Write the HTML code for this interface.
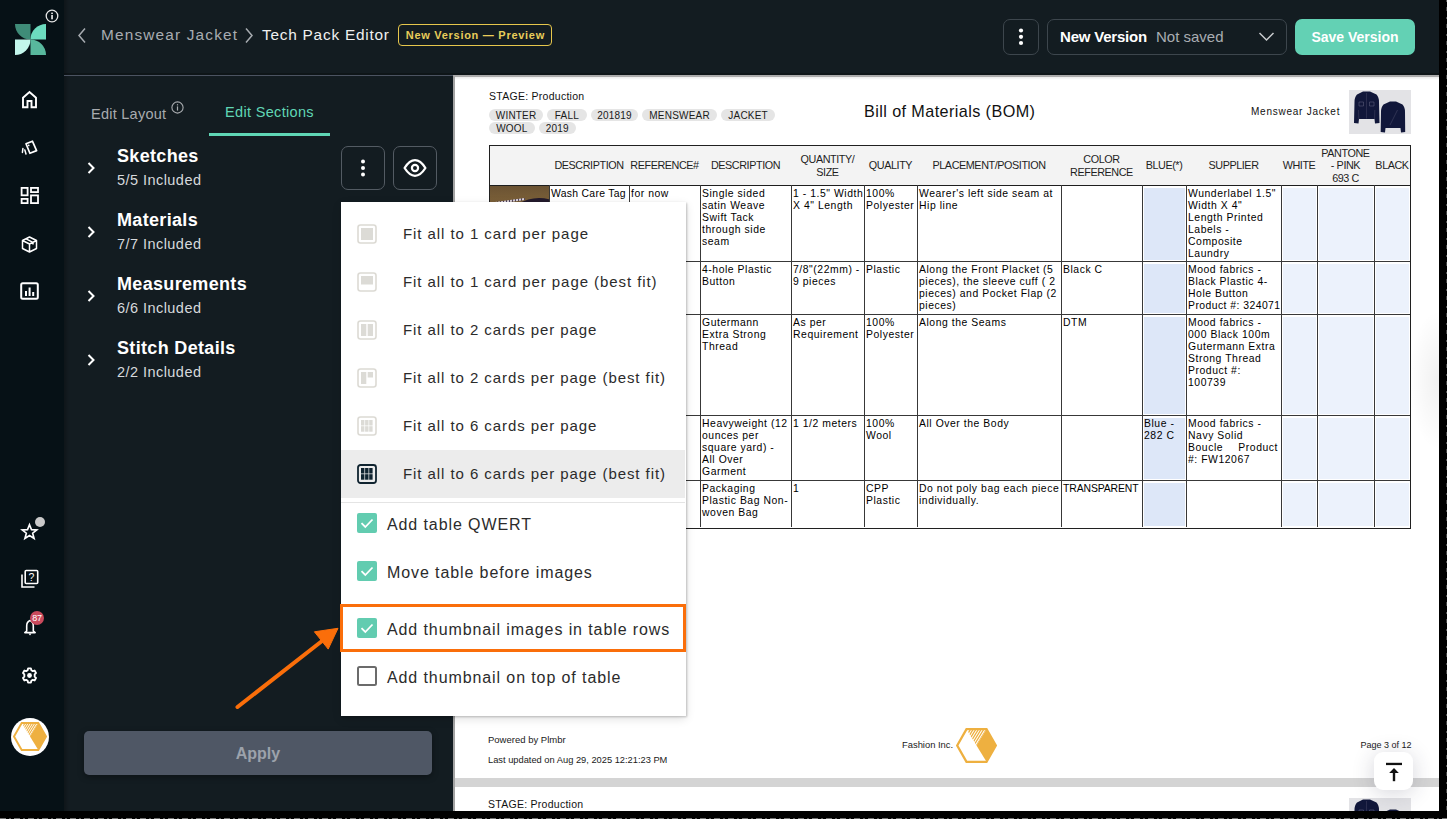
<!DOCTYPE html>
<html><head><meta charset="utf-8">
<style>
*{margin:0;padding:0;box-sizing:border-box}
html,body{width:1447px;height:819px;overflow:hidden;background:#131c21;font-family:"Liberation Sans",sans-serif}
.abs{position:absolute}
#sidebar{position:absolute;left:0;top:0;width:64px;height:819px;background:#061116}
#sbshadow{position:absolute;left:64px;top:0;width:5px;height:819px;background:linear-gradient(90deg,rgba(0,0,0,.25),rgba(0,0,0,0))}
.ic{position:absolute}
#hdrline{position:absolute;left:64px;top:75px;width:390px;height:1px;background:#4b5361}
#hdrshadow{position:absolute;left:64px;top:73px;width:1375px;height:2px;background:rgba(0,0,0,.25)}
.bc{position:absolute;top:26px;font-size:15.4px;line-height:18px;white-space:nowrap}
.badge{position:absolute;left:398px;top:24px;width:154px;height:22px;border:1.5px solid #e6c64c;border-radius:4px;color:#e9cd5a;font-weight:700;font-size:11px;line-height:20px;text-align:center;letter-spacing:.72px;text-indent:.7px}
.hbtn{position:absolute;border:1px solid #3d464d;border-radius:7px}
#save{position:absolute;left:1295px;top:19px;width:120px;height:36px;background:#63d1b4;border-radius:7px;color:#fff;font-weight:700;font-size:14px;line-height:36px;text-align:center}
/* left panel */
.tab{position:absolute;font-size:14.5px;line-height:16px;white-space:nowrap}
.sec{position:absolute;left:64px;width:389px;height:64px}
.sec .t{position:absolute;left:53px;top:8.5px;color:#fff;font-weight:700;font-size:18px;line-height:20px;white-space:nowrap;letter-spacing:.33px}
.sec .s{position:absolute;left:53px;top:34.5px;color:#d6d9dc;font-size:14.5px;line-height:16px;white-space:nowrap;letter-spacing:.45px}
.sec svg{position:absolute;left:22px;top:24px}
#apply{position:absolute;left:84px;top:731px;width:348px;height:44px;background:#4f5765;border-radius:5px;color:#9ca2ab;font-weight:700;font-size:16px;line-height:46px;text-align:center;box-shadow:0 2px 6px rgba(0,0,0,.35)}
/* doc */
#doc{position:absolute;left:453px;top:75px;width:986px;height:736px;background:#fff;border-left:2px solid #a3a3a3;border-top:2px solid #ababab;overflow:hidden}
#docshade{position:absolute;left:0;top:0;width:100%;height:3px;background:linear-gradient(rgba(0,0,0,.08),rgba(0,0,0,0))}
.pill{position:absolute;height:12px;background:#e5e5e5;border-radius:6px;font-size:10px;line-height:13px;color:#1a1a1a;text-align:center;letter-spacing:.2px;text-indent:.2px}
table.bom{position:absolute;border-collapse:collapse;table-layout:fixed;font-size:11px;line-height:12.2px;color:#111}
.th{position:absolute;display:flex;align-items:center;justify-content:center;text-align:center;font-size:10.8px;line-height:12.3px;color:#1e1e1e;letter-spacing:-.42px;padding-top:1px}
.td{position:absolute;font-size:10.4px;line-height:12.17px;color:#000;white-space:nowrap;letter-spacing:.55px}
#black-r{position:absolute;left:1439px;top:0;width:8px;height:819px;background:#000}
#black-b{position:absolute;left:0;top:811px;width:1447px;height:8px;background:#000}
/* dropdown */
#dd{position:absolute;left:341px;top:202px;width:345px;height:514px;background:#fff;box-shadow:1px 1px 2px rgba(0,0,0,.22),0 3px 9px rgba(0,0,0,.12)}
.opt{position:absolute;left:0;width:344px;height:48px}
.opt .lbl{position:absolute;left:62px;top:15px;font-size:15px;line-height:18px;color:#2b2b2b;white-space:nowrap;letter-spacing:.93px}
.opt svg{position:absolute;left:16px;top:14px}
.cb{position:absolute;left:0;width:344px;height:48px}
.cb .lbl{position:absolute;left:46px;top:13px;font-size:16px;line-height:19px;color:#2b2b2b;white-space:nowrap;letter-spacing:.9px}
.cb .box{position:absolute;left:16px;top:11px;width:20px;height:20px;border-radius:2px}
</style></head><body>
<svg width="0" height="0" style="position:absolute"><defs>
<clipPath id="hexclip"><path d="M8.7 1 L25.3 1 L17 14.5 Z"/></clipPath>
<g id="hexlogo">
<path d="M1 14.5 L8.7 1 H25.3 L33 14.5 L25.3 28 H8.7 Z" fill="none" stroke="#eeb040" stroke-width="1.9" stroke-linejoin="miter"/>
<path d="M25.3 1 L33 14.5 L25.3 28 L17 14.5 Z" fill="#eeb040"/>
<g clip-path="url(#hexclip)" stroke="#eeb040" stroke-width="1.1"><path d="M25.3 1 L17 14.5 M23.1 1 L14.8 14.5 M20.9 1 L12.6 14.5 M18.7 1 L10.4 14.5 M16.5 1 L8.2 14.5 M14.3 1 L6 14.5 M12.1 1 L3.8 14.5"/></g>
</g></defs></svg>
<div id="sidebar"></div>
<div id="sbshadow"></div>
<!-- logo -->
<svg class="ic" style="left:15px;top:24px" width="31" height="31" viewBox="0 0 30 30">
<path d="M0 0 H15 V15 A15 15 0 0 1 0 0 Z" fill="#3f8c78"/>
<path d="M15 15 A15 15 0 0 1 30 0 V15 Z" fill="#6cdcbf"/>
<path d="M0 15 H15 A15 15 0 0 1 0 30 Z" fill="#c3f7ec"/>
<path d="M15 15 A15 15 0 0 1 30 30 H15 Z" fill="#58b89d"/>
</svg>
<svg class="ic" style="left:45px;top:9px" width="14" height="14" viewBox="0 0 14 14"><circle cx="7" cy="7" r="5.8" fill="none" stroke="#e6e6e6" stroke-width="1.3"/><rect x="6.2" y="6" width="1.7" height="4.3" fill="#e6e6e6"/><rect x="6.2" y="3.6" width="1.7" height="1.5" fill="#e6e6e6"/></svg>
<!-- home -->
<svg class="ic" style="left:21px;top:90px" width="17" height="19" viewBox="0 0 17 19"><path d="M2 17.2 V7.8 L8.5 2 L15 7.8 V17.2 H10.5 V11 H6.5 V17.2 Z" fill="none" stroke="#fff" stroke-width="1.9" stroke-linejoin="miter"/></svg>
<!-- cards -->
<svg class="ic" style="left:15px;top:134px" width="30" height="26" viewBox="15 134 30 26"><path d="M26 143.8 L32.4 141.2 L36.6 150.6 L29.9 153.3 Z" fill="none" stroke="#fff" stroke-width="1.7" stroke-linejoin="round"/><circle cx="28.7" cy="145.4" r=".9" fill="#fff"/><path d="M22.9 148.6 L22.4 152.4 M24.8 149.9 L26 154" stroke="#fff" stroke-width="1.5" stroke-linecap="round" fill="none"/></svg>
<!-- grid -->
<svg class="ic" style="left:20px;top:186px" width="19" height="19" viewBox="0 0 19 19"><rect x="1.6" y="1.9" width="6" height="7.4" fill="none" stroke="#fff" stroke-width="1.8"/><rect x="11" y="1.9" width="7" height="4.2" fill="none" stroke="#fff" stroke-width="1.8"/><rect x="1.6" y="12.9" width="6" height="4.2" fill="none" stroke="#fff" stroke-width="1.8"/><rect x="11" y="9.4" width="7" height="7.7" fill="none" stroke="#fff" stroke-width="1.8"/></svg>
<!-- box -->
<svg class="ic" style="left:21px;top:236px" width="17" height="17" viewBox="0 0 17 17"><path d="M8.5 1 L15.5 4.5 V12.5 L8.5 16 L1.5 12.5 V4.5 Z M1.5 4.5 L8.5 8 L15.5 4.5 M8.5 8 V16 M5 2.8 L12 6.3 V8.5" fill="none" stroke="#fff" stroke-width="1.5" stroke-linejoin="round"/></svg>
<!-- chart -->
<svg class="ic" style="left:20px;top:282px" width="19" height="18" viewBox="0 0 19 18"><rect x="1.2" y="1.2" width="16.6" height="15.6" rx="1.5" fill="none" stroke="#fff" stroke-width="2"/><rect x="5" y="9" width="2" height="5" fill="#fff"/><rect x="8.6" y="5.5" width="2" height="8.5" fill="#fff"/><rect x="12.2" y="10" width="2" height="4" fill="#fff"/></svg>
<!-- star -->
<svg class="ic" style="left:20px;top:522px" width="19" height="19" viewBox="0 0 19 19"><g transform="translate(9.5 9.6) scale(.9) translate(-9.5 -9.2)"><path d="M9.5 1.6 L11.7 7 L17.6 7.3 L13 11 L14.6 16.8 L9.5 13.6 L4.4 16.8 L6 11 L1.4 7.3 L7.3 7 Z" fill="none" stroke="#fff" stroke-width="1.8" stroke-linejoin="miter"/></g></svg>
<div class="abs" style="left:35px;top:517px;width:10px;height:10px;border-radius:50%;background:#c9c9c9"></div>
<!-- help -->
<svg class="ic" style="left:20px;top:569px" width="19" height="20" viewBox="0 0 19 20"><path d="M2 5.5 V18 H14.5" fill="none" stroke="#fff" stroke-width="1.6"/><rect x="5.2" y="1.5" width="12.5" height="13" rx="1" fill="none" stroke="#fff" stroke-width="1.6"/><text x="11.4" y="12.2" font-size="10.5" font-weight="400" text-anchor="middle" fill="#fff" font-family="Liberation Sans">?</text></svg>
<!-- bell -->
<svg class="ic" style="left:22.5px;top:619px" width="14" height="18" viewBox="0 0 14 18"><path d="M7 1.6 Q3.7 3 3.7 7 V12 L1.8 13.6 H12.2 L10.3 12 V7 Q10.3 3 7 1.6 Z" fill="none" stroke="#fff" stroke-width="1.6" stroke-linejoin="round"/><path d="M5.5 14.6 H8.5 L7 16.4 Z" fill="#fff"/></svg>
<div class="abs" style="left:30px;top:611px;width:14px;height:14px;border-radius:50%;background:#c94a5c;color:#fff;font-size:9px;line-height:14px;text-align:center;letter-spacing:-.2px">87</div>
<!-- gear -->
<svg class="ic" style="left:21px;top:667px" width="17" height="17" viewBox="0 0 24 24"><path d="M10 2 H14 L14.6 4.6 L16.7 5.8 L19.2 5 L21.2 8.5 L19.3 10.3 V13.7 L21.2 15.5 L19.2 19 L16.7 18.2 L14.6 19.4 L14 22 H10 L9.4 19.4 L7.3 18.2 L4.8 19 L2.8 15.5 L4.7 13.7 V10.3 L2.8 8.5 L4.8 5 L7.3 5.8 L9.4 4.6 Z" fill="none" stroke="#fff" stroke-width="2.6" stroke-linejoin="round"/><circle cx="12" cy="12" r="3.4" fill="#fff"/></svg>
<!-- avatar -->
<div class="abs" style="left:11px;top:718px;width:38px;height:38px;border-radius:50%;background:#fff"></div>
<svg class="ic" style="left:13px;top:722px" width="34" height="29" viewBox="0 0 34 29"><use href="#hexlogo"/></svg>

<div id="hdrshadow"></div>
<div id="hdrline"></div>

<!-- header breadcrumb -->
<svg class="ic" style="left:76px;top:27px" width="12" height="17" viewBox="0 0 12 17"><path d="M9 1.5 L3 8.5 L9 15.5" fill="none" stroke="#a7abb0" stroke-width="1.5"/></svg>
<div class="bc" style="left:101px;color:#a8acb1;letter-spacing:1.16px">Menswear Jacket</div>
<svg class="ic" style="left:243px;top:27px" width="12" height="17" viewBox="0 0 12 17"><path d="M3 1.5 L9 8.5 L3 15.5" fill="none" stroke="#a7abb0" stroke-width="1.5"/></svg>
<div class="bc" style="left:262px;color:#f0f0f0;letter-spacing:.76px">Tech Pack Editor</div>
<div class="badge">New Version — Preview</div>

<div class="hbtn" style="left:1003px;top:19px;width:36px;height:36px"></div>
<svg class="ic" style="left:1017px;top:26px" width="8" height="22" viewBox="0 0 8 22"><circle cx="4" cy="4.5" r="2.1" fill="#fff"/><circle cx="4" cy="10.8" r="2.1" fill="#fff"/><circle cx="4" cy="17" r="2.1" fill="#fff"/></svg>
<div class="hbtn" style="left:1047px;top:19px;width:240px;height:36px"></div>
<div class="abs" style="left:1060px;top:28px;font-size:15px;line-height:18px;font-weight:700;color:#fff;white-space:nowrap;letter-spacing:-.2px">New Version</div>
<div class="abs" style="left:1156px;top:28px;font-size:15px;line-height:18px;color:#a9adb2;white-space:nowrap">Not saved</div>
<svg class="ic" style="left:1258px;top:31px" width="17" height="11" viewBox="0 0 17 11"><path d="M1.5 2 L8.5 9 L15.5 2" fill="none" stroke="#c8cbce" stroke-width="1.5"/></svg>
<div id="save">Save Version</div>

<!-- tabs -->
<div class="tab" style="left:91px;top:106px;color:#a8abaf;letter-spacing:.25px">Edit Layout</div>
<svg class="ic" style="left:171px;top:101px" width="13" height="13" viewBox="0 0 13 13"><circle cx="6.5" cy="6.5" r="5.6" fill="none" stroke="#a8abaf" stroke-width="1.1"/><rect x="5.9" y="5.4" width="1.2" height="4.2" fill="#a8abaf"/><rect x="5.9" y="3.2" width="1.2" height="1.2" fill="#a8abaf"/></svg>
<div class="tab" style="left:225px;top:104px;color:#60d6b5;letter-spacing:.33px">Edit Sections</div>
<div class="abs" style="left:209px;top:133px;width:121px;height:2.5px;background:#5fd6b5"></div>


<!-- DOC START -->
<div id="doc">
<div id="docshade"></div>
<div class="abs" style="left:34px;top:13px;font-size:10.5px;line-height:13px;color:#111;white-space:nowrap;letter-spacing:.27px">STAGE: Production</div>
<div class="pill" style="left:34px;top:32px;width:54px">WINTER</div>
<div class="pill" style="left:92px;top:32px;width:39.5px">FALL</div>
<div class="pill" style="left:135.60000000000002px;top:32px;width:47.5px">201819</div>
<div class="pill" style="left:187px;top:32px;width:75px">MENSWEAR</div>
<div class="pill" style="left:266px;top:32px;width:54px">JACKET</div>
<div class="pill" style="left:34px;top:44.5px;width:45.5px">WOOL</div>
<div class="pill" style="left:83.60000000000002px;top:44.5px;width:37px">2019</div>
<div class="abs" style="left:409px;top:24.200000000000003px;font-size:16.2px;line-height:20px;color:#111;white-space:nowrap;letter-spacing:.41px">Bill of Materials (BOM)</div>
<div class="abs" style="left:796px;top:28px;font-size:10px;line-height:14px;color:#111;white-space:nowrap;letter-spacing:.76px">Menswear Jacket</div>
<div class="abs" style="left:894px;top:12.5px;width:62px;height:44px"><svg width="62" height="44" viewBox="0 0 62 44" style="position:absolute;left:0;top:0">
<rect width="62" height="44" fill="#e3e3e6"/>
<path d="M14 1.5 L21 1.5 L27.5 4.5 Q30 7 30 12 L30.5 33 L26 33.5 L25.5 29 L10 29 L9.5 33.5 L5 33 L5.5 12 Q5.5 7 8 4.5 Z" fill="#11173a"/>
<path d="M10 12 h4.5 v4 h-4.5z M20.5 12 h4.5 v4 h-4.5z" fill="none" stroke="#70708a" stroke-width=".45"/>
<path d="M17.5 3 V28.5 M9.5 20 L9.8 29 M25.8 20 L25.5 29" stroke="#4a4a66" stroke-width=".45"/>
<path d="M41 11.4 L47 11.4 L53.5 14.5 Q56 17 56 22 L56.2 42 L52 42.5 L51.5 38 L36.5 38 L36 42.5 L31.7 42 L32 22 Q32 17 34.5 14.5 Z" fill="#11173a"/>
<path d="M48.5 20 L41 35" stroke="#55556f" stroke-width=".45"/>
</svg></div>
<div class="abs" style="left:34px;top:68px;width:921px;height:40px;background:#f3f3f3"></div>
<div class="abs" style="left:689px;top:110.5px;width:41px;height:72.5px;background:#dde7f8"></div>
<div class="abs" style="left:689px;top:186.5px;width:41px;height:49.5px;background:#dde7f8"></div>
<div class="abs" style="left:689px;top:239.5px;width:41px;height:97.5px;background:#dde7f8"></div>
<div class="abs" style="left:689px;top:340.5px;width:41px;height:61.5px;background:#dde7f8"></div>
<div class="abs" style="left:689px;top:405.5px;width:41px;height:43.5px;background:#dde7f8"></div>
<div class="abs" style="left:828px;top:110.5px;width:33px;height:72.5px;background:#ecf2fc"></div>
<div class="abs" style="left:828px;top:186.5px;width:33px;height:49.5px;background:#ecf2fc"></div>
<div class="abs" style="left:828px;top:239.5px;width:33px;height:97.5px;background:#ecf2fc"></div>
<div class="abs" style="left:828px;top:340.5px;width:33px;height:61.5px;background:#ecf2fc"></div>
<div class="abs" style="left:828px;top:405.5px;width:33px;height:43.5px;background:#ecf2fc"></div>
<div class="abs" style="left:864px;top:110.5px;width:54px;height:72.5px;background:#ecf2fc"></div>
<div class="abs" style="left:864px;top:186.5px;width:54px;height:49.5px;background:#ecf2fc"></div>
<div class="abs" style="left:864px;top:239.5px;width:54px;height:97.5px;background:#ecf2fc"></div>
<div class="abs" style="left:864px;top:340.5px;width:54px;height:61.5px;background:#ecf2fc"></div>
<div class="abs" style="left:864px;top:405.5px;width:54px;height:43.5px;background:#ecf2fc"></div>
<div class="abs" style="left:921px;top:110.5px;width:33px;height:72.5px;background:#ecf2fc"></div>
<div class="abs" style="left:921px;top:186.5px;width:33px;height:49.5px;background:#ecf2fc"></div>
<div class="abs" style="left:921px;top:239.5px;width:33px;height:97.5px;background:#ecf2fc"></div>
<div class="abs" style="left:921px;top:340.5px;width:33px;height:61.5px;background:#ecf2fc"></div>
<div class="abs" style="left:921px;top:405.5px;width:33px;height:43.5px;background:#ecf2fc"></div>
<div class="abs" style="left:34px;top:108px;width:60px;height:76px;background:linear-gradient(#6a5232,#85683d 35%,#7d623a);overflow:hidden"><div class="abs" style="left:22px;top:12.5px;width:56px;height:40px;border-radius:50%;background:#231a2c"></div><div class="abs" style="left:6px;top:15px;width:30px;height:2px;transform:rotate(-8deg);background:repeating-linear-gradient(90deg,#d8d0d8 0 2px,#514560 2px 3px)"></div></div>
<div class="abs" style="left:33.5px;top:68px;width:922.5px;height:383.5px;border:1.5px solid #202020"></div>
<div class="abs" style="left:34px;top:107.6px;width:921px;height:1.4px;background:#1e1e1e"></div>
<div class="abs" style="left:34px;top:184px;width:921px;height:1px;background:#383838"></div>
<div class="abs" style="left:34px;top:237px;width:921px;height:1px;background:#383838"></div>
<div class="abs" style="left:34px;top:338px;width:921px;height:1px;background:#383838"></div>
<div class="abs" style="left:34px;top:403px;width:921px;height:1px;background:#383838"></div>
<div class="abs" style="left:94px;top:108px;width:1px;height:342px;background:#383838"></div>
<div class="abs" style="left:174px;top:108px;width:1px;height:342px;background:#383838"></div>
<div class="abs" style="left:245px;top:108px;width:1px;height:342px;background:#383838"></div>
<div class="abs" style="left:336px;top:108px;width:1px;height:342px;background:#383838"></div>
<div class="abs" style="left:409px;top:108px;width:1px;height:342px;background:#383838"></div>
<div class="abs" style="left:462px;top:108px;width:1px;height:342px;background:#383838"></div>
<div class="abs" style="left:606px;top:108px;width:1px;height:342px;background:#383838"></div>
<div class="abs" style="left:687px;top:108px;width:1px;height:342px;background:#383838"></div>
<div class="abs" style="left:731px;top:108px;width:1px;height:342px;background:#383838"></div>
<div class="abs" style="left:826px;top:108px;width:1px;height:342px;background:#383838"></div>
<div class="abs" style="left:862px;top:108px;width:1px;height:342px;background:#383838"></div>
<div class="abs" style="left:919px;top:108px;width:1px;height:342px;background:#383838"></div>
<div class="th" style="left:94px;top:68px;width:80px;height:40px"><span>DESCRIPTION</span></div>
<div class="th" style="left:174px;top:68px;width:71px;height:40px"><span>REFERENCE#</span></div>
<div class="th" style="left:245px;top:68px;width:91px;height:40px"><span>DESCRIPTION</span></div>
<div class="th" style="left:336px;top:68px;width:73px;height:40px"><span>QUANTITY/<br>SIZE</span></div>
<div class="th" style="left:409px;top:68px;width:53px;height:40px"><span>QUALITY</span></div>
<div class="th" style="left:462px;top:68px;width:144px;height:40px"><span>PLACEMENT/POSITION</span></div>
<div class="th" style="left:606px;top:68px;width:81px;height:40px"><span>COLOR<br>REFERENCE</span></div>
<div class="th" style="left:687px;top:68px;width:44px;height:40px"><span>BLUE(*)</span></div>
<div class="th" style="left:731px;top:68px;width:95px;height:40px"><span>SUPPLIER</span></div>
<div class="th" style="left:826px;top:68px;width:36px;height:40px"><span>WHITE</span></div>
<div class="th" style="left:862px;top:68px;width:57px;height:40px"><span>PANTONE<br>- PINK<br>693 C</span></div>
<div class="th" style="left:919px;top:68px;width:36px;height:40px"><span>BLACK</span></div>
<div class="td" style="left:96px;top:110.5px"><span style="letter-spacing:.3px">Wash Care Tag</span></div>
<div class="td" style="left:176px;top:110.5px">for now</div>
<div class="td" style="left:247px;top:110.5px">Single sided<br>satin Weave<br>Swift Tack<br>through side<br>seam</div>
<div class="td" style="left:338px;top:110.5px">1 - 1.5" Width<br>X 4" Length</div>
<div class="td" style="left:411px;top:110.5px">100%<br>Polyester</div>
<div class="td" style="left:464px;top:110.5px">Wearer's left side seam at<br>Hip line</div>
<div class="td" style="left:733px;top:110.5px">Wunderlabel 1.5"<br>Width X 4"<br>Length Printed<br>Labels -<br>Composite<br>Laundry</div>
<div class="td" style="left:247px;top:186.5px">4-hole Plastic<br>Button</div>
<div class="td" style="left:338px;top:186.5px">7/8"(22mm) -<br>9 pieces</div>
<div class="td" style="left:411px;top:186.5px">Plastic</div>
<div class="td" style="left:464px;top:186.5px">Along the Front Placket (5<br>pieces), the sleeve cuff ( 2<br>pieces) and Pocket Flap (2<br>pieces)</div>
<div class="td" style="left:608px;top:186.5px">Black C</div>
<div class="td" style="left:733px;top:186.5px">Mood fabrics -<br>Black Plastic 4-<br>Hole Button<br><span style="letter-spacing:.45px">Product #: 324071</span></div>
<div class="td" style="left:247px;top:239.5px">Gutermann<br>Extra Strong<br>Thread</div>
<div class="td" style="left:338px;top:239.5px">As per<br>Requirement</div>
<div class="td" style="left:411px;top:239.5px">100%<br>Polyester</div>
<div class="td" style="left:464px;top:239.5px">Along the Seams</div>
<div class="td" style="left:608px;top:239.5px">DTM</div>
<div class="td" style="left:733px;top:239.5px">Mood fabrics -<br>000 Black 100m<br>Gutermann Extra<br>Strong Thread<br>Product #:<br>100739</div>
<div class="td" style="left:247px;top:340.5px">Heavyweight (12<br>ounces per<br>square yard) -<br>All Over<br>Garment</div>
<div class="td" style="left:338px;top:340.5px">1 1/2 meters</div>
<div class="td" style="left:411px;top:340.5px">100%<br>Wool</div>
<div class="td" style="left:464px;top:340.5px">All Over the Body</div>
<div class="td" style="left:689px;top:340.5px">Blue -<br>282 C</div>
<div class="td" style="left:733px;top:340.5px">Mood fabrics -<br>Navy Solid<br><span style="display:flex;justify-content:space-between;width:90px"><span>Boucle</span><span>Product</span></span>#: FW12067</div>
<div class="td" style="left:247px;top:405.5px">Packaging<br>Plastic Bag Non-<br>woven Bag</div>
<div class="td" style="left:338px;top:405.5px">1</div>
<div class="td" style="left:411px;top:405.5px">CPP<br>Plastic</div>
<div class="td" style="left:464px;top:405.5px">Do not poly bag each piece<br>individually.</div>
<div class="td" style="left:608px;top:405.5px"><span style="letter-spacing:-.1px">TRANSPARENT</span></div>

<div class="abs" style="left:33px;top:657px;font-size:9.5px;line-height:12px;color:#1a1a1a;white-space:nowrap">Powered by Plmbr</div>
<div class="abs" style="left:33px;top:677px;font-size:9.3px;line-height:12px;color:#1a1a1a;white-space:nowrap">Last updated on Aug 29, 2025 12:21:23 PM</div>
<div class="abs" style="left:447px;top:662px;font-size:9.4px;line-height:12px;color:#1a1a1a;white-space:nowrap">Fashion Inc.</div>
<svg class="ic" style="left:500.5px;top:650.5px" width="41" height="35" viewBox="0 0 34 29"><use href="#hexlogo"/></svg>
<div class="abs" style="left:905.5px;top:662px;font-size:9px;line-height:12px;color:#1a1a1a;white-space:nowrap">Page 3 of 12</div>
<div class="abs" style="left:0;top:701px;width:984px;height:9px;background:#d4d4d4"></div>
<div class="abs" style="left:33px;top:721px;font-size:10.5px;line-height:13px;color:#111;white-space:nowrap;letter-spacing:.27px">STAGE: Production</div>
<div class="abs" style="left:894px;top:721px;width:62px;height:44px"><svg width="62" height="44" viewBox="0 0 62 44" style="position:absolute;left:0;top:0">
<rect width="62" height="44" fill="#e3e3e6"/>
<path d="M14 1.5 L21 1.5 L27.5 4.5 Q30 7 30 12 L30.5 33 L26 33.5 L25.5 29 L10 29 L9.5 33.5 L5 33 L5.5 12 Q5.5 7 8 4.5 Z" fill="#11173a"/>
<path d="M10 12 h4.5 v4 h-4.5z M20.5 12 h4.5 v4 h-4.5z" fill="none" stroke="#70708a" stroke-width=".45"/>
<path d="M17.5 3 V28.5 M9.5 20 L9.8 29 M25.8 20 L25.5 29" stroke="#4a4a66" stroke-width=".45"/>
<path d="M41 11.4 L47 11.4 L53.5 14.5 Q56 17 56 22 L56.2 42 L52 42.5 L51.5 38 L36.5 38 L36 42.5 L31.7 42 L32 22 Q32 17 34.5 14.5 Z" fill="#11173a"/>
<path d="M48.5 20 L41 35" stroke="#55556f" stroke-width=".45"/>
</svg></div>
</div>
<div class="abs" style="left:1374px;top:752px;width:39px;height:38px;background:#fff;border-radius:9px;box-shadow:0 3px 22px rgba(40,40,70,.2)"></div>
<svg class="ic" style="left:1384px;top:761px" width="20" height="22" viewBox="0 0 20 22"><rect x="2" y="1.8" width="16" height="2.3" fill="#111"/><rect x="8.8" y="10" width="2.4" height="10.2" fill="#111"/><path d="M10 7 L14.8 12 L5.2 12 Z" fill="#111"/></svg>
<div class="abs" style="left:1400px;top:300px;width:39px;height:160px;background:radial-gradient(ellipse 30px 70px at 100% 50%,rgba(0,0,0,.06),rgba(0,0,0,0))"></div>
<div id="black-r"></div><div class="abs" style="left:1445.5px;top:0;width:1.5px;height:811px;background:repeating-linear-gradient(180deg,rgba(255,255,255,.3) 0 2px,rgba(0,0,0,0) 2px 7px,rgba(255,255,255,.25) 7px 11px,rgba(0,0,0,0) 11px 17px)"></div>
<div id="black-b"></div><div class="abs" style="left:0;top:817.5px;width:1447px;height:1.5px;background:repeating-linear-gradient(90deg,rgba(255,255,255,.45) 0 6px,rgba(0,0,0,0) 6px 9px,rgba(255,255,255,.35) 9px 11px,rgba(0,0,0,0) 11px 14px)"></div>
<!-- DOC END -->
<!-- sections -->
<div class="sec" style="top:137px"><svg width="10" height="14" viewBox="0 0 10 14"><path d="M2.5 2 L7.5 7 L2.5 12" fill="none" stroke="#fff" stroke-width="2"/></svg><div class="t">Sketches</div><div class="s">5/5 Included</div></div>
<div class="sec" style="top:201px"><svg width="10" height="14" viewBox="0 0 10 14"><path d="M2.5 2 L7.5 7 L2.5 12" fill="none" stroke="#fff" stroke-width="2"/></svg><div class="t">Materials</div><div class="s">7/7 Included</div></div>
<div class="sec" style="top:265px"><svg width="10" height="14" viewBox="0 0 10 14"><path d="M2.5 2 L7.5 7 L2.5 12" fill="none" stroke="#fff" stroke-width="2"/></svg><div class="t">Measurements</div><div class="s">6/6 Included</div></div>
<div class="sec" style="top:329px"><svg width="10" height="14" viewBox="0 0 10 14"><path d="M2.5 2 L7.5 7 L2.5 12" fill="none" stroke="#fff" stroke-width="2"/></svg><div class="t">Stitch Details</div><div class="s">2/2 Included</div></div>
<div class="hbtn" style="left:341px;top:146px;width:44px;height:44px;border-color:#535b63"></div>
<svg class="ic" style="left:359px;top:157px" width="8" height="22" viewBox="0 0 8 22"><circle cx="4" cy="4.4" r="2" fill="#fff"/><circle cx="4" cy="11" r="2" fill="#fff"/><circle cx="4" cy="17.6" r="2" fill="#fff"/></svg>
<div class="hbtn" style="left:393px;top:146px;width:44px;height:44px;border-color:#535b63"></div>
<svg class="ic" style="left:403px;top:159px" width="24" height="18" viewBox="0 0 24 18"><path d="M1.6 9 C5 3.6 8.5 1.2 12 1.2 C15.5 1.2 19 3.6 22.4 9 C19 14.4 15.5 16.8 12 16.8 C8.5 16.8 5 14.4 1.6 9 Z" fill="none" stroke="#fff" stroke-width="2.3" stroke-linejoin="round"/><circle cx="12" cy="9" r="3.1" fill="none" stroke="#fff" stroke-width="2.2"/></svg>
<div id="apply">Apply</div>
<!-- DD START -->
<div id="dd">
<div class="opt" style="top:8px;"><svg width="20" height="20" viewBox="0 0 20 20"><rect x="1" y="1" width="18" height="18" rx="2.5" fill="none" stroke="#dcdad4" stroke-width="1.6"/><rect x="4" y="4" width="12" height="12" fill="#dcdbd6"/></svg><div class="lbl">Fit all to 1 card per page</div></div>
<div class="opt" style="top:56px;"><svg width="20" height="20" viewBox="0 0 20 20"><rect x="1" y="1" width="18" height="18" rx="2.5" fill="none" stroke="#dcdad4" stroke-width="1.6"/><rect x="4" y="4" width="12" height="8.5" fill="#dcdbd6"/></svg><div class="lbl">Fit all to 1 card per page (best fit)</div></div>
<div class="opt" style="top:104px;"><svg width="20" height="20" viewBox="0 0 20 20"><rect x="1" y="1" width="18" height="18" rx="2.5" fill="none" stroke="#dcdad4" stroke-width="1.6"/><rect x="4" y="4" width="5.3" height="12" fill="#dcdbd6"/><rect x="10.7" y="4" width="5.3" height="12" fill="#dcdbd6"/></svg><div class="lbl">Fit all to 2 cards per page</div></div>
<div class="opt" style="top:152px;"><svg width="20" height="20" viewBox="0 0 20 20"><rect x="1" y="1" width="18" height="18" rx="2.5" fill="none" stroke="#dcdad4" stroke-width="1.6"/><rect x="4" y="4" width="5.3" height="12" fill="#dcdbd6"/><rect x="10.7" y="4" width="5.3" height="5.5" fill="#dcdbd6"/></svg><div class="lbl">Fit all to 2 cards per page (best fit)</div></div>
<div class="opt" style="top:200px;"><svg width="20" height="20" viewBox="0 0 20 20"><rect x="1" y="1" width="18" height="18" rx="2.5" fill="none" stroke="#dcdad4" stroke-width="1.6"/><rect x="4.0" y="4.0" width="3.4" height="5.5" fill="#dcdbd6"/><rect x="4.0" y="10.2" width="3.4" height="5.5" fill="#dcdbd6"/><rect x="8.1" y="4.0" width="3.4" height="5.5" fill="#dcdbd6"/><rect x="8.1" y="10.2" width="3.4" height="5.5" fill="#dcdbd6"/><rect x="12.2" y="4.0" width="3.4" height="5.5" fill="#dcdbd6"/><rect x="12.2" y="10.2" width="3.4" height="5.5" fill="#dcdbd6"/></svg><div class="lbl">Fit all to 6 cards per page</div></div>
<div class="opt" style="top:248px;background:#ececec;"><svg width="20" height="20" viewBox="0 0 20 20"><rect x="1" y="1" width="18" height="18" rx="2.5" fill="none" stroke="#102430" stroke-width="1.8"/><rect x="4.0" y="4.0" width="3.4" height="5.5" fill="#102430"/><rect x="4.0" y="10.2" width="3.4" height="5.5" fill="#102430"/><rect x="8.1" y="4.0" width="3.4" height="5.5" fill="#102430"/><rect x="8.1" y="10.2" width="3.4" height="5.5" fill="#102430"/><rect x="12.2" y="4.0" width="3.4" height="5.5" fill="#102430"/><rect x="12.2" y="10.2" width="3.4" height="5.5" fill="#102430"/></svg><div class="lbl">Fit all to 6 cards per page (best fit)</div></div>
<div class="cb" style="top:300px"><div class="box"><svg width="20" height="20" viewBox="0 0 20 20"><rect width="20" height="20" rx="2" fill="#62ccb0"/><path d="M4.5 10.2 L8.3 14 L15.5 6.5" fill="none" stroke="#fff" stroke-width="1.8"/></svg></div><div class="lbl">Add table QWERT</div></div>
<div class="cb" style="top:348px"><div class="box"><svg width="20" height="20" viewBox="0 0 20 20"><rect width="20" height="20" rx="2" fill="#62ccb0"/><path d="M4.5 10.2 L8.3 14 L15.5 6.5" fill="none" stroke="#fff" stroke-width="1.8"/></svg></div><div class="lbl">Move table before images</div></div>
<div class="cb" style="top:404.5px"><div class="box"><svg width="20" height="20" viewBox="0 0 20 20"><rect width="20" height="20" rx="2" fill="#62ccb0"/><path d="M4.5 10.2 L8.3 14 L15.5 6.5" fill="none" stroke="#fff" stroke-width="1.8"/></svg></div><div class="lbl">Add thumbnail images in table rows</div></div>
<div class="cb" style="top:453px"><div class="box"><svg width="20" height="20" viewBox="0 0 20 20"><rect x="1" y="1" width="18" height="18" rx="1.5" fill="none" stroke="#6b6b6b" stroke-width="2"/></svg></div><div class="lbl">Add thumbnail on top of table</div></div>
<div class="abs" style="left:0;top:300px;width:344px;height:1px;background:#e4e4e4"></div>
</div>
<div class="abs" style="left:340px;top:604px;width:346px;height:48px;border:3.5px solid #fa6e0a"></div>
<svg class="ic" style="left:230px;top:620px" width="115" height="95" viewBox="230 620 115 95"><path d="M237.5 707 L322 641" stroke="#fa6e0a" stroke-width="4" stroke-linecap="round"/><path d="M338 628.3 L314.4 631.8 L328.2 649.1 Z" fill="#fa6e0a" stroke="#fa6e0a" stroke-width="1" stroke-linejoin="round"/></svg>
<!-- DD END -->
</body></html>
